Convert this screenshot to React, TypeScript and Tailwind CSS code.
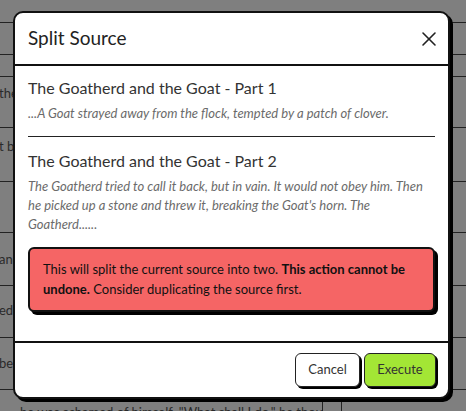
import { X } from 'lucide-react'

const rows = [
  { h: 'h-[23px]', text: '', pad: '' },
  { h: 'h-[32px]', text: '', pad: '' },
  { h: 'h-[22px]', text: '', pad: '' },
  { h: 'h-[51px]', text: 'the Goat', pad: 'pt-[6px]' },
  { h: 'h-[54px]', text: 't back', pad: 'pt-[8px]' },
  { h: 'h-[51px]', text: '', pad: '' },
  { h: 'h-[53px]', text: 'and the', pad: 'pt-[16px]' },
  { h: 'h-[52px]', text: 'ed him', pad: 'pt-[14px]' },
  { h: 'h-[52px]', text: 'begged', pad: 'pt-[15px]' },
]

export default function App() {
  return (
    <div className="relative h-[411px] w-[466px] overflow-hidden bg-white font-['Lato',sans-serif]">
      {/* Table behind the dialog */}
      <div className="flex flex-col text-[13px] text-[#555]">
        {rows.map((r, i) => (
          <div key={i} className={`${r.h} ${r.pad} border-b border-[#444] -ml-[1px] leading-5`}>
            {r.text}
          </div>
        ))}
        <div className="flex h-[30px]">
          <div className="w-[323px] border-r border-[#444] pl-[20px] pt-[12px] leading-5 whitespace-nowrap overflow-hidden">
            he was ashamed of himself. "What shall I do," he thought
          </div>
          <div className="w-[19px] border-r border-[#444]"></div>
        </div>
      </div>

      {/* Overlay */}
      <div className="absolute inset-0 flex items-center justify-center bg-black/50 pr-[3px] pb-[1px]">
        <div className="w-[437px] rounded-[10px] border-2 border-[#111] bg-white shadow-[3px_3px_0_0_#000]">
          {/* Header */}
          <div className="flex h-[53px] items-center justify-between border-b-2 border-[#111] px-[13px]">
            <h2 className="text-[19px] text-[#222]">Split Source</h2>
            <button className="-mr-[6px] text-[#222]">
              <X className="h-6 w-6" strokeWidth={1.6} />
            </button>
          </div>

          {/* Body */}
          <div className="px-[13px] pt-[10px] pb-[29px]">
            <div>
              <h3 className="text-[16px] leading-6 text-[#333]">The Goatherd and the Goat - Part 1</h3>
              <p className="mt-[4px] text-[13px] leading-[19px] italic text-[#6b6b6b]">
                ...A Goat strayed away from the flock, tempted by a patch of clover.
              </p>
            </div>
            <div className="mt-[13px] border-t border-[#222] pt-[12px]">
              <h3 className="text-[16px] leading-6 text-[#333]">The Goatherd and the Goat - Part 2</h3>
              <p className="mt-[4px] text-[13px] leading-[19px] italic text-[#6b6b6b]">
                The Goatherd tried to call it back, but in vain. It would not obey him. Then he picked up a stone and threw it, breaking the Goat's horn. The Goatherd......
              </p>
            </div>
            <div className="mt-[13px] rounded-[6px] border-2 border-[#111] bg-[#f56565] px-[13px] pt-[10px] pb-[11px] text-[13px] leading-5 text-[#111] shadow-[3px_3px_0_0_#000]">
              This will split the current source into two. <strong>This action cannot be undone.</strong> Consider duplicating the source first.
            </div>
          </div>

          {/* Footer */}
          <div className="flex justify-end gap-[4px] border-t-2 border-[#111] px-[12px] py-[10px]">
            <button className="h-[34px] w-[65px] rounded-[6px] border-[1.5px] border-[#222] bg-white text-[13px] text-[#333] shadow-[2px_2px_0_0_#000]">
              Cancel
            </button>
            <button className="h-[34px] w-[72px] rounded-[6px] border-[1.5px] border-[#222] bg-[#a3e635] text-[13px] text-[#333] shadow-[2px_2px_0_0_#000]">
              Execute
            </button>
          </div>
        </div>
      </div>
    </div>
  )
}
